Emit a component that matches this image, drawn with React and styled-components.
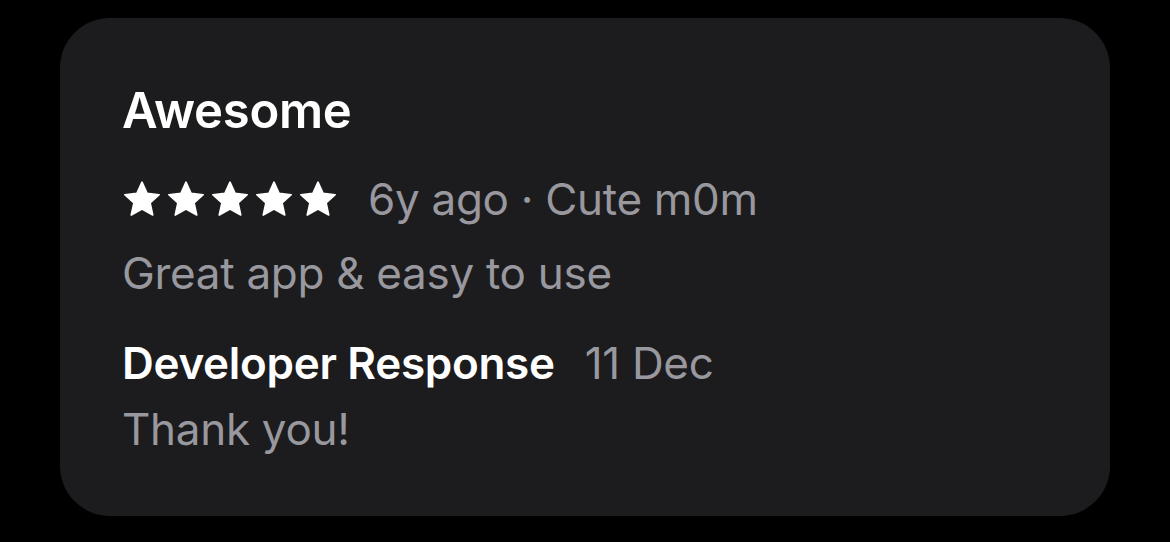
import React from 'react';
import styled, { createGlobalStyle } from 'styled-components';

const GlobalStyle = createGlobalStyle`
  html, body {
    margin: 0;
    padding: 0;
    background: #000;
  }
  body {
    width: 1170px;
    height: 542px;
    overflow: hidden;
    font-family: Inter, "Noto Sans", sans-serif;
    -webkit-font-smoothing: antialiased;
  }
`;

const Page = styled.div`
  padding: 18px 60px 26px 60px;
  box-sizing: border-box;
  height: 542px;
`;

const Card = styled.div`
  background: #1c1c1e;
  border-radius: 50px;
  height: 498px;
  box-sizing: border-box;
  padding: 67px 62px 0 62px;
  display: flex;
  flex-direction: column;
`;

const Title = styled.div`
  color: #fff;
  font-size: 49px;
  font-weight: 600;
  line-height: 52px;
  letter-spacing: -0.3px;
`;

const MetaRow = styled.div`
  display: flex;
  align-items: center;
  margin-top: ${p => p.$top || 0}px;
  gap: ${p => p.$gap || 0}px;
`;

const Stars = styled.div`
  display: flex;
  gap: 4px;
`;

const Muted = styled.span`
  color: #98989e;
  font-size: 44px;
  font-weight: 400;
  line-height: 52px;
  letter-spacing: -0.3px;
`;

const Body = styled.div`
  color: #98989e;
  font-size: 44px;
  font-weight: 400;
  line-height: 52px;
  margin-top: ${p => p.$top || 0}px;
  letter-spacing: -0.3px;
`;

const Strong = styled.span`
  color: #fff;
  font-size: 44px;
  font-weight: 600;
  line-height: 52px;
  letter-spacing: -0.3px;
`;

const Star = () => (
  <svg width="40" height="38" viewBox="0 0 24 23">
    <path
      fill="#fff"
      stroke="#fff"
      strokeWidth="1"
      strokeLinejoin="round"
      d="M12 1.3l3.1 6.8 7.3.8-5.5 5 1.6 7.3L12 17.5l-6.5 3.7 1.6-7.3-5.5-5 7.3-.8z"
    />
  </svg>
);

const App = () => (
  <>
    <GlobalStyle />
    <Page>
      <Card>
        <Title>Awesome</Title>
        <MetaRow $top={36} $gap={30}>
          <Stars>
            {[0, 1, 2, 3, 4].map(i => (
              <Star key={i} />
            ))}
          </Stars>
          <Muted>6y ago · Cute m0m</Muted>
        </MetaRow>
        <Body $top={22}>Great app &amp; easy to use</Body>
        <MetaRow $top={38} $gap={30}>
          <Strong>Developer Response</Strong>
          <Muted>11 Dec</Muted>
        </MetaRow>
        <Body $top={14}>Thank you!</Body>
      </Card>
    </Page>
  </>
);

export default App;
